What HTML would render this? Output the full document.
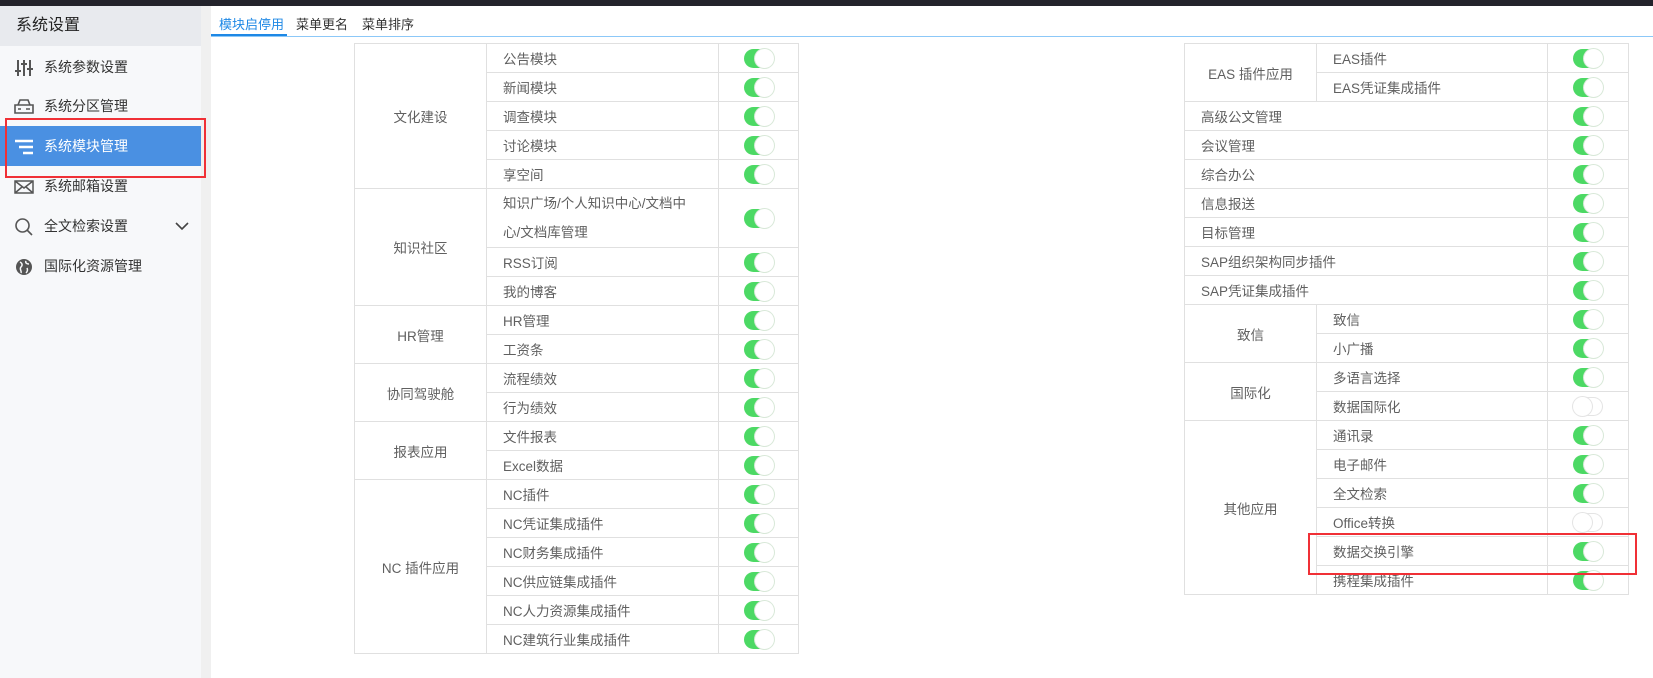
<!DOCTYPE html>
<html><head><meta charset="utf-8"><style>
*{margin:0;padding:0;box-sizing:border-box}
body{width:1653px;height:678px;overflow:hidden;background:#fff;font-family:"Liberation Sans","Noto Sans CJK SC",sans-serif;position:relative}
.top{position:absolute;left:0;top:0;width:1653px;height:6px;background:#23232b}
.side{position:absolute;left:0;top:6px;width:201px;height:672px;background:#f7f8fa}
.gap{position:absolute;left:201px;top:6px;width:10px;height:672px;background:#f0f0f0}
.sh{height:40px;background:#e8eaee;font-size:16px;color:#222;padding-left:16px;line-height:40px}
.mi{position:absolute;left:0;width:201px;height:40px;line-height:40px;font-size:14px;color:#333;padding-left:44px}
.mi svg{position:absolute;left:14px;top:11px}
.act{background:#4a90e2;color:#fff}
.red{position:absolute;border:2px solid #f03036;z-index:5}
.tabs{position:absolute;left:211px;top:6px;width:1442px;height:31px;border-bottom:1px solid #8cc8f8}
.tab{position:absolute;top:8px;font-size:13px;color:#333}
.ul{position:absolute;left:0;top:28px;width:76px;height:2px;background:#1e88e5}
table{position:absolute;border-collapse:collapse;font-size:13.5px;color:#606060;table-layout:fixed}
td{border:1px solid #e0e0e0;height:29px;padding:0 0 0 16px;white-space:nowrap}
td.g{text-align:center;padding:0}
td.t{padding:0;text-align:center}
.sw{display:inline-block;width:30px;height:19px;border-radius:10px;background:#4cd964;position:relative;vertical-align:middle}
.sw::after{content:"";position:absolute;right:0;top:0;width:19px;height:19px;border-radius:50%;background:#fff;box-shadow:0 0 0 1px #d8e8d8}
.sw.off{background:#fff;box-shadow:inset 0 0 0 1px #e4e4e4}
.sw.off::after{left:0;right:auto;box-shadow:0 0 0 1px #e4e4e4}
</style></head><body>
<div class="top"></div>
<div class="side">
<div class="sh">系统设置</div>
</div>
<div class="mi" style="top:47px"><svg width="20" height="20" viewBox="0 0 20 20" fill="none" stroke="#555" stroke-width="2"><path d="M4 2v16M10 2v16M16 2v16M1 13h6M7 6h6M13 11h6"/></svg>系统参数设置</div>
<div class="mi" style="top:86px"><svg width="20" height="20" viewBox="0 0 20 20" fill="none" stroke="#555" stroke-width="1.6"><path d="M4 8l2-5h8l2 5M1 8h18v8H1z M4 12h3M12 12h4"/></svg>系统分区管理</div>
<div class="mi act" style="top:126px"><svg width="20" height="20" viewBox="0 0 20 20" fill="none" stroke="#fff" stroke-width="2.4"><path d="M1 4h18M5 10h14M9 16h10"/></svg>系统模块管理</div>
<div class="mi" style="top:166px"><svg width="20" height="20" viewBox="0 0 20 20" fill="none" stroke="#555" stroke-width="1.5"><path d="M1 4h18v12H1zM1 4l9 7 9-7M1 16l7-6M19 16l-7-6"/></svg>系统邮箱设置</div>
<div class="mi" style="top:206px"><svg width="20" height="20" viewBox="0 0 20 20" fill="none" stroke="#555" stroke-width="1.6"><circle cx="8.5" cy="8.5" r="6.5"/><path d="M13 13l5 5"/></svg>全文检索设置<svg style="left:175px;top:15px" width="14" height="10" viewBox="0 0 14 10" fill="none" stroke="#444" stroke-width="1.6"><path d="M1 2l6 6 6-6"/></svg></div>
<div class="mi" style="top:246px"><svg width="20" height="20" viewBox="0 0 20 20"><circle cx="10" cy="10" r="8" fill="#555"/><path d="M6 5c2 1 3 3 1 5s1 4 0 6M12 4c-1 2 1 3 3 3M13 11c1 2 0 4-1 5" stroke="#f7f8fa" stroke-width="1.5" fill="none"/></svg>国际化资源管理</div>
<div class="gap"></div>
<div class="red" style="left:5px;top:118px;width:201px;height:60px"></div>
<div class="tabs">
<div class="tab" style="left:8px;color:#1e88e5">模块启停用</div>
<div class="tab" style="left:85px">菜单更名</div>
<div class="tab" style="left:151px">菜单排序</div>
<div class="ul"></div>
</div>

<table style="left:354px;top:43px;width:444px">
<colgroup><col style="width:132px"><col style="width:232px"><col style="width:80px"></colgroup>
<tr><td class="g" rowspan="5">文化建设</td><td>公告模块</td><td class="t"><span class="sw"></span></td></tr>
<tr><td>新闻模块</td><td class="t"><span class="sw"></span></td></tr>
<tr><td>调查模块</td><td class="t"><span class="sw"></span></td></tr>
<tr><td>讨论模块</td><td class="t"><span class="sw"></span></td></tr>
<tr><td>享空间</td><td class="t"><span class="sw"></span></td></tr>
<tr><td class="g" rowspan="3">知识社区</td><td style="height:58px;line-height:29px">知识广场/个人知识中心/文档中<br>心/文档库管理</td><td class="t"><span class="sw"></span></td></tr>
<tr><td>RSS订阅</td><td class="t"><span class="sw"></span></td></tr>
<tr><td>我的博客</td><td class="t"><span class="sw"></span></td></tr>
<tr><td class="g" rowspan="2">HR管理</td><td>HR管理</td><td class="t"><span class="sw"></span></td></tr>
<tr><td>工资条</td><td class="t"><span class="sw"></span></td></tr>
<tr><td class="g" rowspan="2">协同驾驶舱</td><td>流程绩效</td><td class="t"><span class="sw"></span></td></tr>
<tr><td>行为绩效</td><td class="t"><span class="sw"></span></td></tr>
<tr><td class="g" rowspan="2">报表应用</td><td>文件报表</td><td class="t"><span class="sw"></span></td></tr>
<tr><td>Excel数据</td><td class="t"><span class="sw"></span></td></tr>
<tr><td class="g" rowspan="6">NC 插件应用</td><td>NC插件</td><td class="t"><span class="sw"></span></td></tr>
<tr><td>NC凭证集成插件</td><td class="t"><span class="sw"></span></td></tr>
<tr><td>NC财务集成插件</td><td class="t"><span class="sw"></span></td></tr>
<tr><td>NC供应链集成插件</td><td class="t"><span class="sw"></span></td></tr>
<tr><td>NC人力资源集成插件</td><td class="t"><span class="sw"></span></td></tr>
<tr><td>NC建筑行业集成插件</td><td class="t"><span class="sw"></span></td></tr>
</table>

<table style="left:1184px;top:43px;width:444px">
<colgroup><col style="width:132px"><col style="width:231px"><col style="width:81px"></colgroup>
<tr><td class="g" rowspan="2">EAS 插件应用</td><td>EAS插件</td><td class="t"><span class="sw"></span></td></tr>
<tr><td>EAS凭证集成插件</td><td class="t"><span class="sw"></span></td></tr>
<tr><td colspan="2">高级公文管理</td><td class="t"><span class="sw"></span></td></tr>
<tr><td colspan="2">会议管理</td><td class="t"><span class="sw"></span></td></tr>
<tr><td colspan="2">综合办公</td><td class="t"><span class="sw"></span></td></tr>
<tr><td colspan="2">信息报送</td><td class="t"><span class="sw"></span></td></tr>
<tr><td colspan="2">目标管理</td><td class="t"><span class="sw"></span></td></tr>
<tr><td colspan="2">SAP组织架构同步插件</td><td class="t"><span class="sw"></span></td></tr>
<tr><td colspan="2">SAP凭证集成插件</td><td class="t"><span class="sw"></span></td></tr>
<tr><td class="g" rowspan="2">致信</td><td>致信</td><td class="t"><span class="sw"></span></td></tr>
<tr><td>小广播</td><td class="t"><span class="sw"></span></td></tr>
<tr><td class="g" rowspan="2">国际化</td><td>多语言选择</td><td class="t"><span class="sw"></span></td></tr>
<tr><td>数据国际化</td><td class="t"><span class="sw off"></span></td></tr>
<tr><td class="g" rowspan="6">其他应用</td><td>通讯录</td><td class="t"><span class="sw"></span></td></tr>
<tr><td>电子邮件</td><td class="t"><span class="sw"></span></td></tr>
<tr><td>全文检索</td><td class="t"><span class="sw"></span></td></tr>
<tr><td>Office转换</td><td class="t"><span class="sw off"></span></td></tr>
<tr><td>数据交换引擎</td><td class="t"><span class="sw"></span></td></tr>
<tr><td>携程集成插件</td><td class="t"><span class="sw"></span></td></tr>
</table>
<div class="red" style="left:1308px;top:533px;width:329px;height:42px"></div>
<div style="position:absolute;left:211px;top:655px;width:1442px;height:23px;background:#fff"></div>
</body></html>
